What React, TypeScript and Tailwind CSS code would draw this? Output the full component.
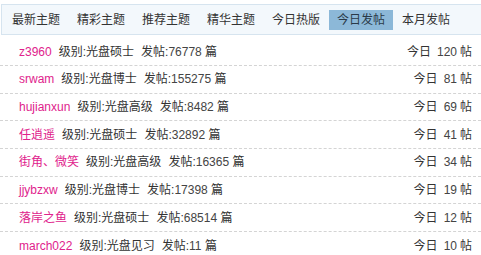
import React from "react";

/* ── Data ── */
const TABS = ["最新主题", "精彩主题", "推荐主题", "精华主题", "今日热版", "今日发帖", "本月发帖"];
const ACTIVE = "今日发帖";

interface Poster {
  name:  string;
  level: string;
  posts: number;
  today: number;
}

const POSTERS: Poster[] = [
  { name: "z3960",     level: "光盘硕士", posts: 76778,  today: 120 },
  { name: "srwam",     level: "光盘博士", posts: 155275, today: 81 },
  { name: "hujianxun", level: "光盘高级", posts: 8482,   today: 69 },
  { name: "任逍遥",     level: "光盘硕士", posts: 32892,  today: 41 },
  { name: "街角、微笑",  level: "光盘高级", posts: 16365,  today: 34 },
  { name: "jjybzxw",   level: "光盘博士", posts: 17398,  today: 19 },
  { name: "落岸之鱼",   level: "光盘硕士", posts: 68514,  today: 12 },
  { name: "march022",  level: "光盘见习", posts: 11,     today: 10 },
];

const FONT = "font-['Liberation_Sans','Noto_Sans_CJK_SC',sans-serif]";

export default function App() {
  return (
    <div className={`w-[481px] h-[255px] bg-white text-[12px] text-[#333] ${FONT}`}>
      {/* ── Tab bar ── */}
      <div className="mt-[4px] ml-[1px] h-[31px] flex items-center pl-[2px] gap-[1px] bg-[#f3f8fc] border-y border-l border-[#d6e4ef]">
        {TABS.map((t) => (
          <span
            key={t}
            className={`h-[20px] px-[8px] flex items-center leading-none ${
              t === ACTIVE ? "bg-[#8cb8d8] text-[#2a3a48]" : "text-[#333]"
            }`}
          >
            {t}
          </span>
        ))}
      </div>

      {/* ── Poster rows ── */}
      <ul className="mt-[3px]">
        {POSTERS.map((p, i) => (
          <li
            key={p.name}
            className={`flex items-center pl-[19px] pr-[9px] ${
              i === 0 ? "h-[28px]" : "h-[27.67px]"
            } ${i < POSTERS.length - 1 ? "border-b border-dashed border-[#d4d4d4]" : ""}`}
          >
            <span className="text-[#e0228c]">{p.name}</span>
            <span className="ml-[7px]">级别:{p.level}</span>
            <span className="ml-[7px]">
              发帖:<span className="text-[#444]">{p.posts}</span> 篇
            </span>
            <span className="ml-auto flex items-center">
              <span>今日</span>
              <span className="ml-[6px] text-[#444]">{p.today}</span>
              <span className="ml-[3px]">帖</span>
            </span>
          </li>
        ))}
      </ul>
    </div>
  );
}
